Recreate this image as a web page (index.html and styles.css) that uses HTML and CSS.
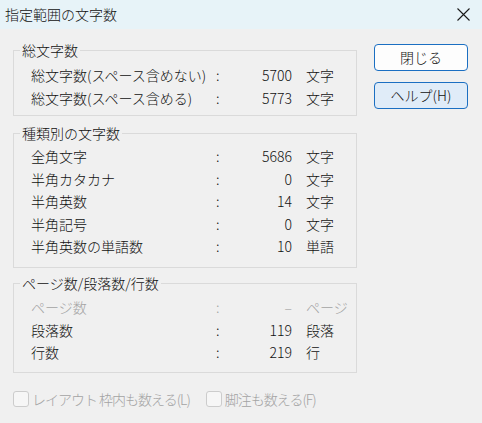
FILE: index.html
```html
<!DOCTYPE html>
<html lang="ja">
<head>
<meta charset="utf-8">
<title>指定範囲の文字数</title>
<link rel="stylesheet" href="styles.css">
</head>
<body>
<div class="titlebar">
  <span class="title">指定範囲の文字数</span>
  <svg class="close" width="13" height="13" viewBox="0 0 13 13"><path d="M0.5 0.5 L12.5 12.5 M12.5 0.5 L0.5 12.5" stroke="#1a1a1a" stroke-width="1.1" fill="none"/></svg>
</div>
<div class="content">
  <div class="main">
    <div class="groups">
      <fieldset class="group g1">
        <legend>総文字数</legend>
        <div class="row"><span class="label">総文字数(スペース含めない)</span><span class="colon">:</span><span class="num">5700</span><span class="unit">文字</span></div>
        <div class="row"><span class="label">総文字数(スペース含める)</span><span class="colon">:</span><span class="num">5773</span><span class="unit">文字</span></div>
      </fieldset>
      <fieldset class="group g2">
        <legend>種類別の文字数</legend>
        <div class="row"><span class="label">全角文字</span><span class="colon">:</span><span class="num">5686</span><span class="unit">文字</span></div>
        <div class="row"><span class="label">半角カタカナ</span><span class="colon">:</span><span class="num">0</span><span class="unit">文字</span></div>
        <div class="row"><span class="label">半角英数</span><span class="colon">:</span><span class="num">14</span><span class="unit">文字</span></div>
        <div class="row"><span class="label">半角記号</span><span class="colon">:</span><span class="num">0</span><span class="unit">文字</span></div>
        <div class="row"><span class="label">半角英数の単語数</span><span class="colon">:</span><span class="num">10</span><span class="unit">単語</span></div>
      </fieldset>
      <fieldset class="group g3">
        <legend>ページ数/段落数/行数</legend>
        <div class="row disabled"><span class="label">ページ数</span><span class="colon">:</span><span class="num">–</span><span class="unit">ページ</span></div>
        <div class="row"><span class="label">段落数</span><span class="colon">:</span><span class="num">119</span><span class="unit">段落</span></div>
        <div class="row"><span class="label">行数</span><span class="colon">:</span><span class="num">219</span><span class="unit">行</span></div>
      </fieldset>
    </div>
    <div class="buttons">
      <button class="btn btn-default">閉じる</button>
      <button class="btn btn-focus">ヘルプ(H)</button>
    </div>
  </div>
  <div class="options">
    <label class="check"><span class="box"></span><span class="check-text">レイアウト 枠内も数える(L)</span></label>
    <label class="check"><span class="box"></span><span class="check-text">脚注も数える(F)</span></label>
  </div>
</div>
</body>
</html>
```
FILE: styles.css
```css
* { box-sizing: border-box; }
html, body {
  margin: 0;
  padding: 0;
  background: #f0f0f0;
  font-family: "Noto Sans CJK JP", "Noto Sans", sans-serif;
  font-size: 14px;
  font-weight: 300;
  color: #111;
}
.titlebar {
  height: 29px;
  background: #e7f3f8;
  display: flex;
  align-items: center;
  justify-content: space-between;
  padding: 0 12px 1px 5px;
}
.title {
  font-size: 14px;
  line-height: 18px;
  color: #111;
}
.close { display: block; }
.content {
  padding: 12px 0 0 13px;
}
.main {
  display: flex;
  align-items: flex-start;
}
.groups {
  width: 344px;
  display: flex;
  flex-direction: column;
}
.group {
  margin: 0;
  padding: 0;
  border: 1px solid #dadada;
  min-inline-size: 0;
}
.group legend {
  margin-left: 6px;
  padding: 0 2px;
  line-height: 18px;
  font-size: 14px;
}
.g1 { padding: 4px 0 6px; }
.g2 { padding: 3px 0 9px; margin-top: 8px; }
.g3 { padding: 4px 0 8.5px; margin-top: 6.5px; }
.row {
  display: grid;
  grid-template-columns: 184px 6px 71px auto;
  padding-left: 17px;
  height: 22.5px;
  align-items: center;
  line-height: 18px;
}
.g1 .row { height: 23px; }
.num { text-align: right; }
.unit { padding-left: 14px; }
.colon { text-align: left; padding-left: 1px; }
.row.disabled { color: #a3a3a3; }
.buttons {
  margin-left: 17px;
  padding-top: 3px;
  display: flex;
  flex-direction: column;
  gap: 11px;
}
.btn {
  width: 94px;
  height: 27px;
  font-family: inherit;
  font-weight: 300;
  font-size: 14px;
  color: #111;
  border: 1px solid #1b6fc2;
  border-radius: 4px;
  padding: 0 0 1px;
  line-height: 18px;
}
.btn-default { background: #fdfdfd; }
.btn-focus { background: #e0ecf8; }
.options {
  margin-top: 16px;
  display: flex;
  align-items: center;
  height: 20px;
}
.check {
  display: flex;
  align-items: center;
  color: #a3a3a3;
  line-height: 18px;
  margin-right: 16px;
}
.check-text { letter-spacing: -1px; }
.box {
  width: 16px;
  height: 16px;
  border: 1px solid #cccccc;
  border-radius: 3px;
  background: #f6f6f6;
  margin-right: 3px;
}
```
